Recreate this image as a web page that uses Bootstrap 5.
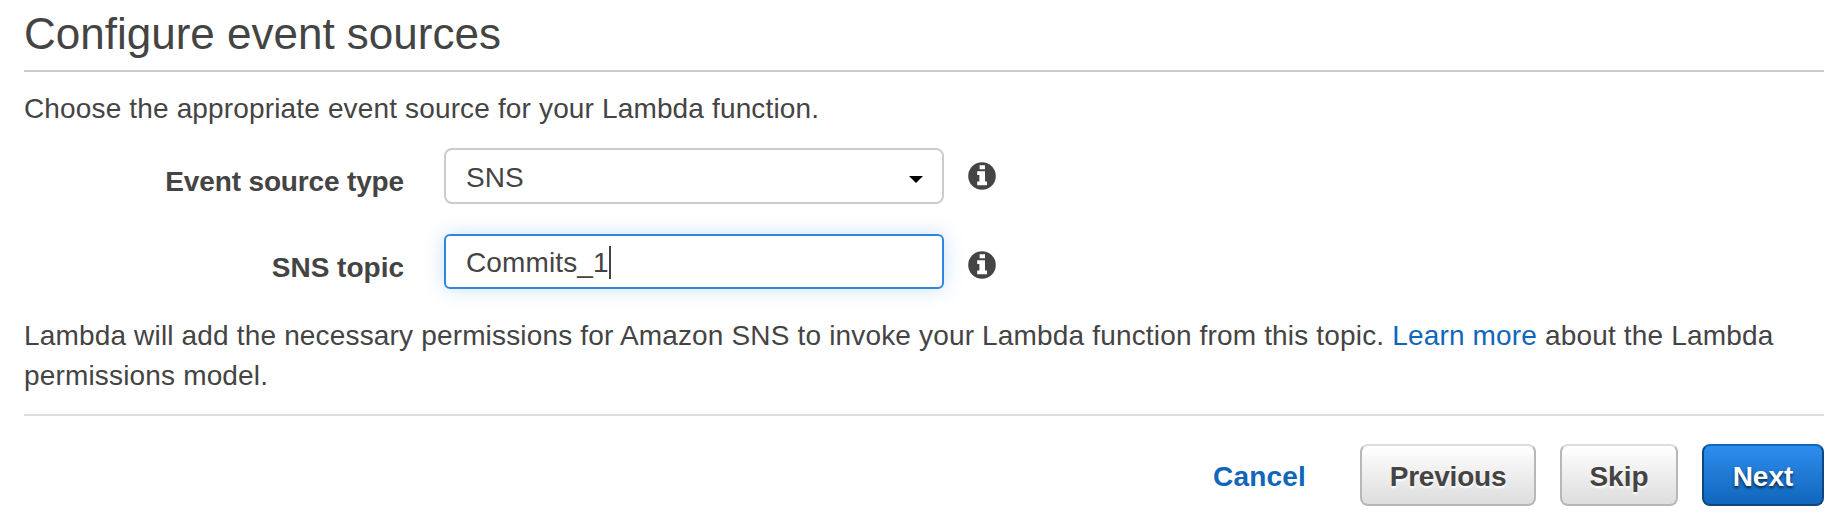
<!DOCTYPE html>
<html lang="en">
<head>
<meta charset="utf-8">
<meta name="viewport" content="width=device-width, initial-scale=1">
<title>Configure event sources</title>
<link rel="stylesheet" href="https://cdn.jsdelivr.net/npm/bootstrap@5.3.0/dist/css/bootstrap.min.css">
<style>
body{font-family:"Liberation Sans",Arial,sans-serif;font-size:28px;line-height:40px;color:#444;background:#fff}
.wizard{padding:4px 20px 20px 24px}
.wizard-title{font-size:44px;line-height:60px;padding-bottom:6px;border-bottom:2px solid #ccc}
.intro{margin:17px 0 19px;letter-spacing:.15px}
.form-line{gap:24px}
.form-line + .form-line{margin-top:30px}
.field-label{width:380px;padding-top:12px;font-weight:700;letter-spacing:-.15px;white-space:nowrap}
.field-label-topic{letter-spacing:0}
.field{width:500px;height:56px;padding:3px 19px 0 20px;border:2px solid #ccc;border-radius:8px;margin-left:16px}
.field-active{height:55px;padding-top:2px;border-color:#2e86de;border-radius:6px;box-shadow:0 0 20px rgba(46,134,222,.25)}
.field-active span{letter-spacing:.13px}
.text-cursor{width:2px;height:33px;background:#444}
.arrow{width:14px;height:7px;margin-top:4px}
.info{width:28px;height:28px;flex:none}
.info-topic{margin-top:7px}
.note{margin:27px 0 18px;letter-spacing:.165px}
.note a,.act-cancel{color:#1166bb;text-decoration:none}
.actions{border-top:2px solid #ddd;padding-top:28px;gap:24px}
.act{height:62px;padding:0;font-size:28px;line-height:61px;font-weight:700;border:2px solid #b7b7b7;border-top-color:#ddd;border-radius:8px;color:#444;background:linear-gradient(#fff,#ddd);text-shadow:0 2px 2px #fff}
.act-previous{width:176px;letter-spacing:-.2px}
.act-skip{width:118px}
.act-next{width:122px;color:#fff;background:linear-gradient(#2e8dee,#1166bb);border-color:#0d4680;border-top-color:#1166bb;text-shadow:0 2px 3px rgba(0,0,0,.7)}
.act-cancel{font-weight:700;line-height:65px;letter-spacing:.2px;margin:0 30px -3px 0}
</style>
</head>
<body>
<svg class="d-none" aria-hidden="true">
<symbol id="info" viewBox="0 0 28 28"><circle cx="14" cy="14" r="13.8" fill="#444"/><path fill="#fff" d="M11.6 3.2h5.4v4h-5.4zM9.2 9.2h7.8v10.2h2v3.8H9.2v-3.8h2.2v-6.4H9.2z"/></symbol>
</svg>
<main class="wizard">
<h1 class="wizard-title fw-normal mb-0">Configure event sources</h1>
<p class="intro">Choose the appropriate event source for your Lambda function.</p>
<div class="form-line d-flex align-items-center">
<div class="field-label text-end">Event source type</div>
<div class="field d-flex align-items-center justify-content-between" role="combobox"><span>SNS</span><svg class="arrow" viewBox="0 0 14 7"><path d="M0 0h14L7 7z"/></svg></div>
<svg class="info"><use href="#info"/></svg>
</div>
<div class="form-line d-flex align-items-center">
<div class="field-label field-label-topic text-end">SNS topic</div>
<div class="field field-active d-flex align-items-center" role="textbox"><span>Commits_1</span><i class="text-cursor"></i></div>
<svg class="info info-topic"><use href="#info"/></svg>
</div>
<p class="note">Lambda will add the necessary permissions for Amazon SNS to invoke your Lambda function from this topic. <a href="#">Learn more</a> about the Lambda permissions model.</p>
<div class="actions d-flex justify-content-end">
<a class="act-cancel" href="#">Cancel</a>
<button class="btn act act-previous" type="button">Previous</button>
<button class="btn act act-skip" type="button">Skip</button>
<button class="btn act act-next" type="button">Next</button>
</div>
</main>
<script src="https://cdn.jsdelivr.net/npm/bootstrap@5.3.0/dist/js/bootstrap.bundle.min.js"></script>
</body>
</html>
